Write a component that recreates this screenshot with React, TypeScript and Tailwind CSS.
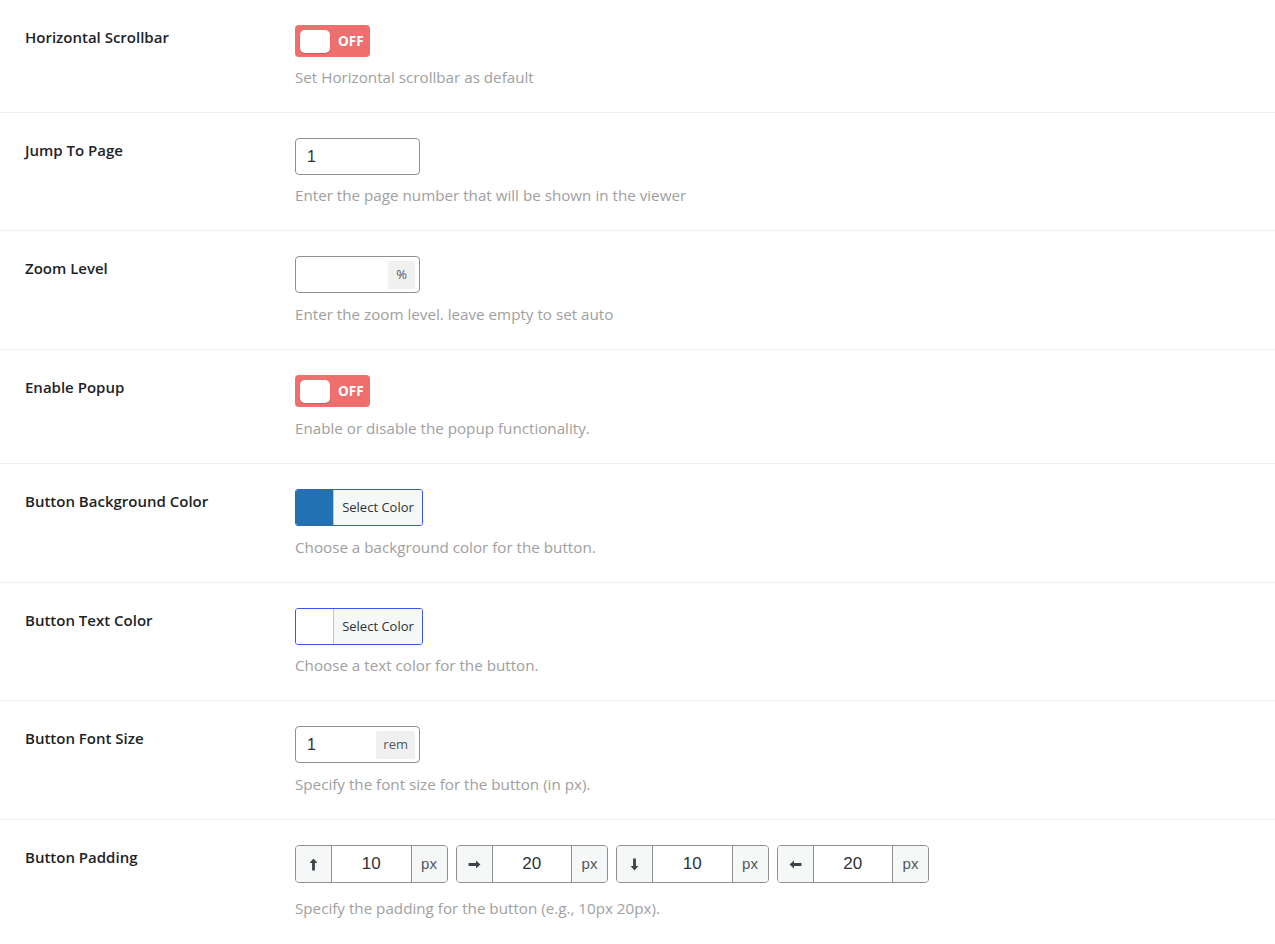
import React from 'react';

const font = { fontFamily: '"Open Sans", "Noto Sans", sans-serif' };

function Toggle() {
  return (
    <div className="flex h-[32px] w-[75px] items-center rounded-[4px] bg-[#ef6e6e] pl-[5px]">
      <div className="h-[23px] w-[30px] rounded-[5px] bg-white shadow-[0_1px_1px_rgba(0,0,0,0.15)]" />
      <span className="ml-[8px] text-[13.5px] font-bold text-white">OFF</span>
    </div>
  );
}

function NumberInput({ value, unit }: { value?: string; unit?: string }) {
  return (
    <div className="flex h-[37px] w-[125px] items-center rounded-[4px] border border-[#8c8f94] bg-white pl-[11px] pr-[4px]">
      <span className="flex-1 text-[16px] text-[#2c3338] [font-family:'Liberation_Sans',Arial,sans-serif]">
        {value}
      </span>
      {unit && (
        <span className="flex h-[28px] min-w-[27px] items-center justify-center rounded-[2px] bg-[#f0f0f0] px-[7px] text-[13px] text-[#50575e]">
          {unit}
        </span>
      )}
    </div>
  );
}

function ColorPicker({ color }: { color: string }) {
  return (
    <div className="flex h-[37px] w-[128px] overflow-hidden rounded-[3px] border border-[#3858e9]">
      <div className="w-[38px] border-r border-[#c3c4c7]" style={{ backgroundColor: color }} />
      <div className="flex flex-1 items-center justify-center bg-[#f6f7f7] text-[13px] text-[#2c3338]">
        Select Color
      </div>
    </div>
  );
}

function Arrow({ dir }: { dir: 'up' | 'right' | 'down' | 'left' }) {
  const rot = { up: 0, right: 90, down: 180, left: 270 }[dir];
  return (
    <svg width="13" height="13" viewBox="0 0 12 12" style={{ transform: `rotate(${rot}deg)` }}>
      <path d="M6 0.5 L9.6 4.6 H7.3 V11.5 H4.7 V4.6 H2.4 Z" fill="#3c434a" />
    </svg>
  );
}

function PaddingInput({ dir, value }: { dir: 'up' | 'right' | 'down' | 'left'; value: string }) {
  return (
    <div className="flex h-[38px] w-[152.5px] overflow-hidden rounded-[4px] border border-[#8c8f94]">
      <div className="flex w-[36px] items-center justify-center border-r border-[#8c8f94] bg-[#f6f7f7]">
        <Arrow dir={dir} />
      </div>
      <div className="flex flex-1 items-center justify-center bg-white text-[17px] text-[#2c3338] [font-family:'Liberation_Sans',Arial,sans-serif]">
        {value}
      </div>
      <div className="flex w-[36px] items-center justify-center border-l border-[#8c8f94] bg-[#f6f7f7] text-[15px] text-[#50575e] [font-family:'Liberation_Sans',Arial,sans-serif]">
        px
      </div>
    </div>
  );
}

function Row({ label, desc, children, last }: { label: string; desc: string; children: React.ReactNode; last?: boolean }) {
  return (
    <div className={`flex pb-[25px] pl-[25px] pt-[25px] ${last ? '' : 'border-b border-[#f0f0f0]'}`}>
      <div className="w-[270px] text-[15px] font-semibold leading-[24px] text-[#1d2327]">{label}</div>
      <div className="flex flex-col">
        {children}
        <p className={`${last ? 'mt-[15px]' : 'mt-[10px]'} text-[15.2px] leading-[20px] text-[#a0a0a0]`}>{desc}</p>
      </div>
    </div>
  );
}

export default function App() {
  return (
    <div className="min-h-screen w-full bg-white" style={font}>
      <Row label="Horizontal Scrollbar" desc="Set Horizontal scrollbar as default">
        <Toggle />
      </Row>
      <Row label="Jump To Page" desc="Enter the page number that will be shown in the viewer">
        <NumberInput value="1" />
      </Row>
      <Row label="Zoom Level" desc="Enter the zoom level. leave empty to set auto">
        <div className="h-[38px]">
          <NumberInput unit="%" />
        </div>
      </Row>
      <Row label="Enable Popup" desc="Enable or disable the popup functionality.">
        <div className="h-[33px]">
          <Toggle />
        </div>
      </Row>
      <Row label="Button Background Color" desc="Choose a background color for the button.">
        <div className="h-[38px]">
          <ColorPicker color="#2271b1" />
        </div>
      </Row>
      <Row label="Button Text Color" desc="Choose a text color for the button.">
        <ColorPicker color="#ffffff" />
      </Row>
      <Row label="Button Font Size" desc="Specify the font size for the button (in px).">
        <div className="h-[38px]">
          <NumberInput value="1" unit="rem" />
        </div>
      </Row>
      <Row label="Button Padding" desc="Specify the padding for the button (e.g., 10px 20px)." last>
        <div className="flex gap-[8px]">
          <PaddingInput dir="up" value="10" />
          <PaddingInput dir="right" value="20" />
          <PaddingInput dir="down" value="10" />
          <PaddingInput dir="left" value="20" />
        </div>
      </Row>
    </div>
  );
}
